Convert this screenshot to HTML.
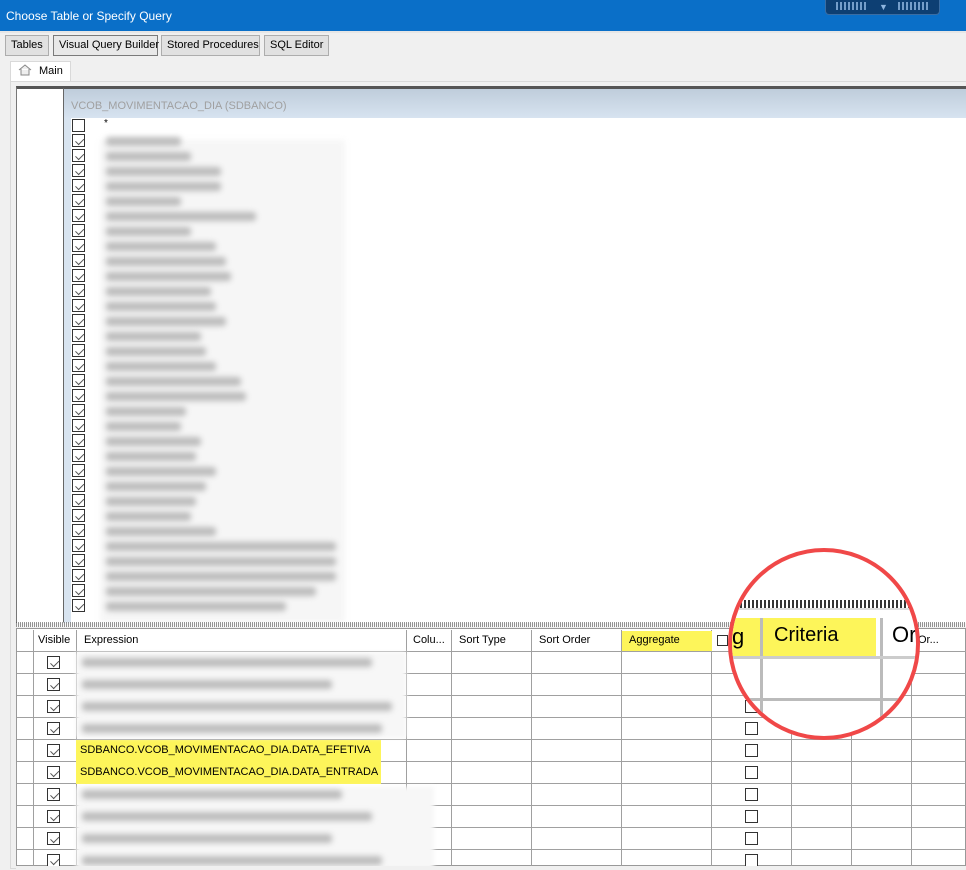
<!DOCTYPE html>
<html><head><meta charset="utf-8"><style>
*{margin:0;padding:0;box-sizing:border-box}
body{width:966px;height:870px;overflow:hidden;background:#f0f0f0;font-family:"Liberation Sans",sans-serif;font-size:12px;position:relative;color:#000}
.abs{position:absolute;white-space:nowrap}
.title{left:0;top:0;width:966px;height:31px;background:#0a6fc8;color:#fff;font-size:12px;padding:9px 0 0 6px}
.dock{left:825px;top:0;width:115px;height:15px;background:#0d3f73;border:1px solid #3a6da3;border-top:none;border-radius:0 0 4px 4px}
.btn{top:35px;height:21px;border:1px solid #adadad;background:#e1e1e1;font-size:11px;padding:3px 5px 0 5px}
.cb{position:absolute;width:13px;height:13px;border:1px solid #333;background:#fff}
.cb.k::after{content:"";position:absolute;left:2px;top:1px;width:7px;height:4px;border-left:1.5px solid #555;border-bottom:1.5px solid #555;transform:rotate(-45deg) translate(-1px,2px)}
.blur{position:absolute;height:9px;background:#bcbcbc;filter:blur(3px);border-radius:3px}
.vl{position:absolute;width:1px;background:#a0a0a0}
.hl{position:absolute;height:1px;background:#a0a0a0}
</style></head><body>
<div class="abs title">Choose Table or Specify Query</div>
<div class="abs dock"><div style="position:absolute;left:10px;top:2px;width:30px;height:8px;background:repeating-linear-gradient(90deg,#8fb6e0 0 2px,transparent 2px 4px);opacity:.8"></div><div style="position:absolute;left:53px;top:2px;color:#8fb6e0;font-size:9px">▼</div><div style="position:absolute;left:72px;top:2px;width:30px;height:8px;background:repeating-linear-gradient(90deg,#8fb6e0 0 2px,transparent 2px 4px);opacity:.8"></div></div>
<div class="abs" style="left:0;top:31px;width:966px;height:2px;background:#e6e6e6"></div>
<div class="abs btn" style="left:5px">Tables</div>
<div class="abs btn" style="left:53px;border-color:#7a7a7a;background:#e8e8e8;width:105px">Visual Query Builder</div>
<div class="abs btn" style="left:161px;width:99px">Stored Procedures</div>
<div class="abs btn" style="left:264px">SQL Editor</div>
<div class="abs" style="left:10px;top:61px;width:61px;height:21px;background:#fff;border:1px solid #d9d9d9;border-bottom:none;padding:3px 0 0 28px;font-size:11px">Main</div>
<svg class="abs" style="left:18px;top:64px" width="14" height="12"><path d="M1 6 L7 1 L13 6 M3 5 V11 H11 V5" fill="#eee" stroke="#888"/></svg>
<div class="abs" style="left:10px;top:81px;width:956px;height:788px;border:1px solid #d9d9d9;border-right:none;background:#f0f0f0"></div>
<div class="abs" style="left:16px;top:86px;width:950px;height:537px;background:#fff;border-left:1px solid #777;border-top:3px solid #555"></div>
<div class="abs" style="left:63px;top:88px;width:1px;height:535px;background:#666"></div>
<div class="abs" style="left:64px;top:89px;width:902px;height:29px;background:linear-gradient(#bfcddb,#d7e3f0);color:#a0a0a0;font-size:11px;padding:11px 0 0 7px">VCOB_MOVIMENTACAO_DIA (SDBANCO)</div>
<div class="abs" style="left:64px;top:118px;width:7px;height:505px;background:#d8e4f0"></div>
<div class="abs" style="left:100px;top:140px;width:245px;height:483px;background:#f6f6f6;filter:blur(3px)"></div>
<div class="abs" style="left:104px;top:118px;font-size:10px">*</div>
<div id="top"></div>
<div class="abs" style="left:16px;top:622px;width:950px;height:5px;background:repeating-linear-gradient(90deg,#555 0 1px,#fff 1px 2px),#fff;opacity:.6"></div>
<div class="abs" style="left:16px;top:628px;width:950px;height:238px;background:#fff;border:1px solid #999"></div>
<div id="grid"></div>
<div class="abs" style="left:16px;top:866px;width:950px;height:4px;background:#f0f0f0"></div>
<script>
var t='';
var ws=[110,75,85,115,115,75,150,85,110,120,125,105,110,120,95,100,110,135,140,80,75,95,90,110,100,90,85,110,230,230,230,210,180];
for(var i=0;i<33;i++){var y=119+i*15;t+='<div class="cb'+(i?' k':'')+'" style="left:72px;top:'+y+'px"></div>';if(i)t+='<div class="blur" style="left:106px;top:'+(y+3)+'px;width:'+ws[i]+'px"></div>';}
document.getElementById('top').innerHTML=t;
var g='';
var cols=[33,76,406,451,531,621,711,791,851,911];
for(var c=0;c<cols.length;c++)g+='<div class="vl" style="left:'+cols[c]+'px;top:630px;height:236px"></div>';
g+='<div class="hl" style="left:17px;top:651px;width:949px"></div>';
for(var r=1;r<10;r++)g+='<div class="hl" style="left:17px;top:'+(651+r*22)+'px;width:949px"></div>';
var hd=[[38,'Visible'],[84,'Expression'],[413,'Colu...'],[459,'Sort Type'],[539,'Sort Order'],[629,'Aggregate'],[918,'Or...']];
g+='<div class="abs" style="left:622px;top:631px;width:90px;height:20px;background:#fdf55a"></div>';
for(var h=0;h<hd.length;h++)g+='<div class="abs" style="left:'+hd[h][0]+'px;top:634px;font-size:11px">'+hd[h][1]+'</div>';
g+='<div class="abs" style="left:76px;top:740px;width:305px;height:44px;background:#fdf55a"></div>';
for(var r=0;r<10;r++){var y=651+r*22;g+='<div class="cb k" style="left:47px;top:'+(y+5)+'px"></div>';if(r>=2)g+='<div class="cb" style="left:745px;top:'+(y+5)+'px"></div>';}
g+='<div class="abs" style="left:80px;top:744px;font-size:11px">SDBANCO.VCOB_MOVIMENTACAO_DIA.DATA_EFETIVA</div>';
g+='<div class="abs" style="left:80px;top:766px;font-size:11px">SDBANCO.VCOB_MOVIMENTACAO_DIA.DATA_ENTRADA</div>';
g+='<div class="abs" style="left:76px;top:652px;width:330px;height:86px;background:#f7f7f7;filter:blur(2px)"></div>';
g+='<div class="abs" style="left:76px;top:787px;width:358px;height:83px;background:#f7f7f7;filter:blur(2px)"></div>';
var bw=[[0,290],[1,250],[2,310],[3,300],[6,260],[7,290],[8,250],[9,300]];
for(var b=0;b<bw.length;b++)g+='<div class="blur" style="left:82px;top:'+(651+bw[b][0]*22+7)+'px;width:'+bw[b][1]+'px"></div>';
g+='<div class="abs" style="left:728px;top:548px;width:192px;height:192px;border-radius:50%;overflow:hidden;background:#fff;border:4px solid #f04848">'+
'<div class="abs" style="left:0;top:48px;width:200px;height:8px;background:repeating-linear-gradient(90deg,#333 0 2px,#fff 2px 4px)"></div>'+
'<div class="abs" style="left:0;top:56px;width:200px;height:2px;background:#ddd"></div>'+
'<div class="abs" style="left:0;top:66px;width:144px;height:38px;background:#fdf55a"></div>'+
'<div class="abs" style="left:0;top:72px;font-size:22px">g</div>'+
'<div class="abs" style="left:42px;top:72px;font-size:20px">Criteria</div>'+
'<div class="abs" style="left:160px;top:70px;font-size:22px">Or</div>'+
'<div class="abs" style="left:28px;top:66px;width:3px;height:136px;background:#bbb"></div>'+
'<div class="abs" style="left:148px;top:66px;width:3px;height:136px;background:#bbb"></div>'+
'<div class="abs" style="left:0;top:104px;width:200px;height:3px;background:#ccc"></div>'+
'<div class="abs" style="left:0;top:146px;width:200px;height:3px;background:#bbb"></div>'+
'</div>';
g+='<div class="abs" style="left:717px;top:635px;width:11px;height:11px;border:1px solid #333"></div>';
document.getElementById('grid').innerHTML=g;
</script>
</body></html>
